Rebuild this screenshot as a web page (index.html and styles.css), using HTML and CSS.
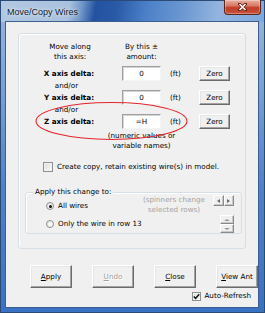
FILE: index.html
```html
<!DOCTYPE html>
<html>
<head>
<meta charset="utf-8">
<title>Move/Copy Wires</title>
<link rel="stylesheet" href="styles.css">
</head>
<body>
<div class="window">
  <div class="titlebar">
    <span class="title">Move/Copy Wires</span>
    <div class="close">
      <svg width="9" height="8" viewBox="0 0 9 8"><path d="M1.5 1 L7.5 7 M7.5 1 L1.5 7" stroke="#5a1a12" stroke-width="3" stroke-linecap="square"/><path d="M1.5 1 L7.5 7 M7.5 1 L1.5 7" stroke="#fff" stroke-width="1.6"/></svg>
    </div>
  </div>
  <div class="client">
    <div class="group">
      <div class="axes">
        <div class="hdr c1">Move along<br>this axis:</div>
        <div class="hdr c2"><span>By this ±<br>amount:</span></div>

        <div class="lbl">X axis delta:</div>
        <div class="input">0</div>
        <div class="unit">(ft)</div>
        <div class="btn zero">Zero</div>

        <div class="andor">and/or</div>

        <div class="lbl">Y axis delta:</div>
        <div class="input">0</div>
        <div class="unit">(ft)</div>
        <div class="btn zero">Zero</div>

        <div class="andor">and/or</div>

        <div class="lbl">Z axis delta:</div>
        <div class="input">=H</div>
        <div class="unit">(ft)</div>
        <div class="btn zero">Zero</div>

        <div class="note c2"><span>(numeric values or<br>variable names)</span></div>
      </div>

      <div class="check-row"><span class="cb"></span><span>Create copy, retain existing wire(s) in model.</span></div>

      <div class="apply">
        <span class="legend">Apply this change to:</span>
        <div class="radios">
          <div class="radio-row"><span class="rb on"></span><span>All wires</span></div>
          <div class="radio-row second"><span class="rb"></span><span>Only the wire in row 13</span></div>
        </div>
        <div class="spin-note">(spinners change<br>selected rows)</div>
        <div class="spins">
          <div class="hspin"><span class="sb"><i class="ar left"></i></span><span class="sb"><i class="ar right"></i></span></div>
          <div class="vspin"><span class="sb"><i class="ar up"></i></span><span class="sb"><i class="ar down"></i></span></div>
        </div>
      </div>
    </div>

    <div class="buttons">
      <div class="btn big"><span><u>A</u>pply</span></div>
      <div class="btn big disabled"><span><u>U</u>ndo</span></div>
      <div class="btn big"><span><u>C</u>lose</span></div>
      <div class="btn big"><span><u>V</u>iew Ant</span></div>
    </div>
    <div class="auto">
      <span class="cb checked"><svg width="7" height="7" viewBox="0 0 7 7"><path d="M0.8 3.4 L2.6 5.4 L6.2 1.2" fill="none" stroke="#111" stroke-width="1.5"/></svg></span>
      <span>Auto-Refresh</span>
    </div>
  </div>
  <svg class="mark" width="265" height="313" viewBox="0 0 265 313"><ellipse cx="111.5" cy="121" rx="75.5" ry="18.5" fill="none" stroke="#e3242b" stroke-width="1.1"/></svg>
</div>
</body>
</html>
```
FILE: styles.css
```css
* { box-sizing: border-box; }
html, body { margin: 0; padding: 0; }
body {
  width: 265px;
  height: 313px;
  overflow: hidden;
  font-family: "DejaVu Sans", sans-serif;
  font-size: 7.2px;
  color: #000;
  background: #fff;
}
.window {
  position: relative;
  width: 265px;
  height: 313px;
  display: flex;
  flex-direction: column;
  background: linear-gradient(180deg, #9cb7da 0%, #7ea4d4 25%, #4f82c6 60%, #3a71c2 100%);
  box-shadow: inset 0 0 0 1px #2b4a76;
}
.titlebar {
  height: 22px;
  display: flex;
  align-items: flex-start;
  background: linear-gradient(100deg, #b2c8e2 0%, #a9c1de 26%, #6f95c8 31%, #2352a0 36%, #2a5aa7 44%, #4b80c8 55%, #6f9ad2 70%, #93b5df 82%, #7ea7da 100%);
  box-shadow: inset 0 1px 0 #2b4a76, inset 1px 0 0 #2b4a76, inset -1px 0 0 #2b4a76;
}
.title {
  margin: 6px 0 0 7px;
  font-family: "Liberation Sans", sans-serif;
  font-size: 9px;
  line-height: 12px;
  color: #0f1b2c;
  text-shadow: 0 0 5px rgba(255,255,255,0.8), 0 0 2px rgba(255,255,255,0.6);
}
.close {
  margin-left: auto;
  margin-right: 4px;
  width: 37px;
  height: 15px;
  display: flex;
  align-items: center;
  justify-content: center;
  background: linear-gradient(180deg, #e9b0a3 0%, #d97a66 40%, #c23d27 55%, #c9513a 100%);
  border: 1px solid #5d2418;
  border-top: none;
  border-radius: 0 0 4px 4px;
  box-shadow: inset 0 0 0 1px rgba(255,255,255,0.3);
}
.client {
  margin: 0 7px 6px 6px;
  flex: 1;
  background: #f0f0f0;
  box-shadow: 0 0 0 1px #3d5f90;
  padding: 11px 0 0 12px;
}
.group {
  width: 228px;
  border: 1px solid #d5dfe5;
  border-radius: 3px;
  box-shadow: inset 1px 1px 0 #fff;
  padding: 8px 0 14px 0;
}
.axes {
  display: grid;
  grid-template-columns: 82px 48px 29px 32px;
  padding-left: 21px;
}
.hdr { line-height: 10px; margin-bottom: 4px; }
.c1 { grid-column: 1; text-align: center; padding-right: 24px; padding-left: 2px; }
.c2 { grid-column: 2; width: 39px; display: flex; justify-content: center; text-align: center; white-space: nowrap; }
.lbl {
  grid-column: 1;
  font-weight: bold;
  line-height: 15px;
  text-align: center;
  padding-right: 24px;
}
.input {
  grid-column: 2;
  width: 39px;
  height: 15px;
  background: #fff;
  border: 1px solid;
  border-color: #a0a0a0 #f4f4f4 #f4f4f4 #a0a0a0;
  box-shadow: inset 1px 1px 0 #d6d6d6;
  text-align: center;
  line-height: 13px;
}
.unit { grid-column: 3; line-height: 15px; }
.btn {
  background: #f0f0f0;
  border: 1px solid;
  border-color: #ffffff #6b6b6b #6b6b6b #ffffff;
  box-shadow: inset -1px -1px 0 #a3a3a3, inset 1px 1px 0 #e6e6e6;
  display: flex;
  align-items: center;
  justify-content: center;
}
.zero { grid-column: 4; width: 31px; height: 15px; line-height: 13px; }
.andor {
  grid-column: 1;
  line-height: 9px;
  text-align: center;
  padding-right: 29px;
}
.note { margin-top: 2px; line-height: 10px; }
.check-row {
  margin: 11px 0 0 24px;
  height: 10px;
  display: flex;
  align-items: center;
  gap: 4px;
  line-height: 10px;
}
.cb {
  width: 10px;
  height: 10px;
  flex: none;
  border: 1px solid #8e8f8f;
  background: linear-gradient(135deg, #dcdcdc, #fbfbfb);
  box-shadow: inset 0 0 0 1px #f2f2f2;
  display: flex;
  align-items: center;
  justify-content: center;
}
.apply {
  position: relative;
  margin: 20px 0 0 6px;
  width: 217px;
  border: 1px solid #d5dfe5;
  border-radius: 3px;
  box-shadow: inset 1px 1px 0 #fff;
  padding: 2px 7px 0 0;
  display: flex;
  align-items: flex-start;
}
.legend {
  position: absolute;
  top: -6px;
  left: 7px;
  padding: 0 2px;
  background: #f0f0f0;
  line-height: 10px;
}
.radios {
  flex: 1;
  padding-left: 20px;
  margin-top: 6px;
}
.radio-row {
  display: flex;
  align-items: center;
  gap: 4px;
  height: 10px;
  line-height: 10px;
  white-space: nowrap;
}
.radio-row.second { margin-top: 8px; }
.rb {
  width: 8px;
  height: 8px;
  flex: none;
  border-radius: 50%;
  border: 1px solid #8e8f8f;
  background: radial-gradient(circle at 60% 60%, #ffffff, #dedede);
  display: flex;
  align-items: center;
  justify-content: center;
}
.rb.on::after {
  content: "";
  width: 3px;
  height: 3px;
  border-radius: 50%;
  background: #111;
}
.spin-note {
  color: #a3a3a3;
  text-align: center;
  line-height: 10px;
  margin-right: 8px;
  white-space: nowrap;
}
.spins {
  display: flex;
  flex-direction: column;
  align-items: flex-end;
  gap: 9px;
}
.hspin { display: flex; width: 21px; height: 11px; }
.vspin { display: flex; flex-direction: column; width: 14px; height: 18px; }
.sb {
  flex: 1;
  display: flex;
  align-items: center;
  justify-content: center;
  background: #f0f0f0;
  border: 1px solid;
  border-color: #fff #8a8a8a #8a8a8a #fff;
  box-shadow: inset -1px -1px 0 #c8c8c8;
}
.ar { width: 0; height: 0; border: 2px solid transparent; }
.ar.left { border-left: none; border-right: 3px solid #6a6a6a; }
.ar.right { border-right: none; border-left: 3px solid #6a6a6a; }
.ar.up { border-top: none; border-bottom: 2px solid #9a9a9a; border-left-width: 3px; border-right-width: 3px; }
.ar.down { border-bottom: none; border-top: 2px solid #9a9a9a; border-left-width: 3px; border-right-width: 3px; }
.buttons {
  margin-top: 16px;
  padding-left: 12px;
  display: flex;
  gap: 20px;
}
.big { width: 42px; height: 23px; }
.big.disabled { color: #a0a0a0; text-shadow: 1px 1px 0 #fff; }
.auto {
  margin-top: 3px;
  padding-right: 7px;
  display: flex;
  justify-content: flex-end;
  align-items: center;
  gap: 3px;
  height: 10px;
  line-height: 10px;
}
.auto .cb { width: 9px; height: 9px; }
.mark {
  position: absolute;
  top: 0;
  left: 0;
  pointer-events: none;
}
```
